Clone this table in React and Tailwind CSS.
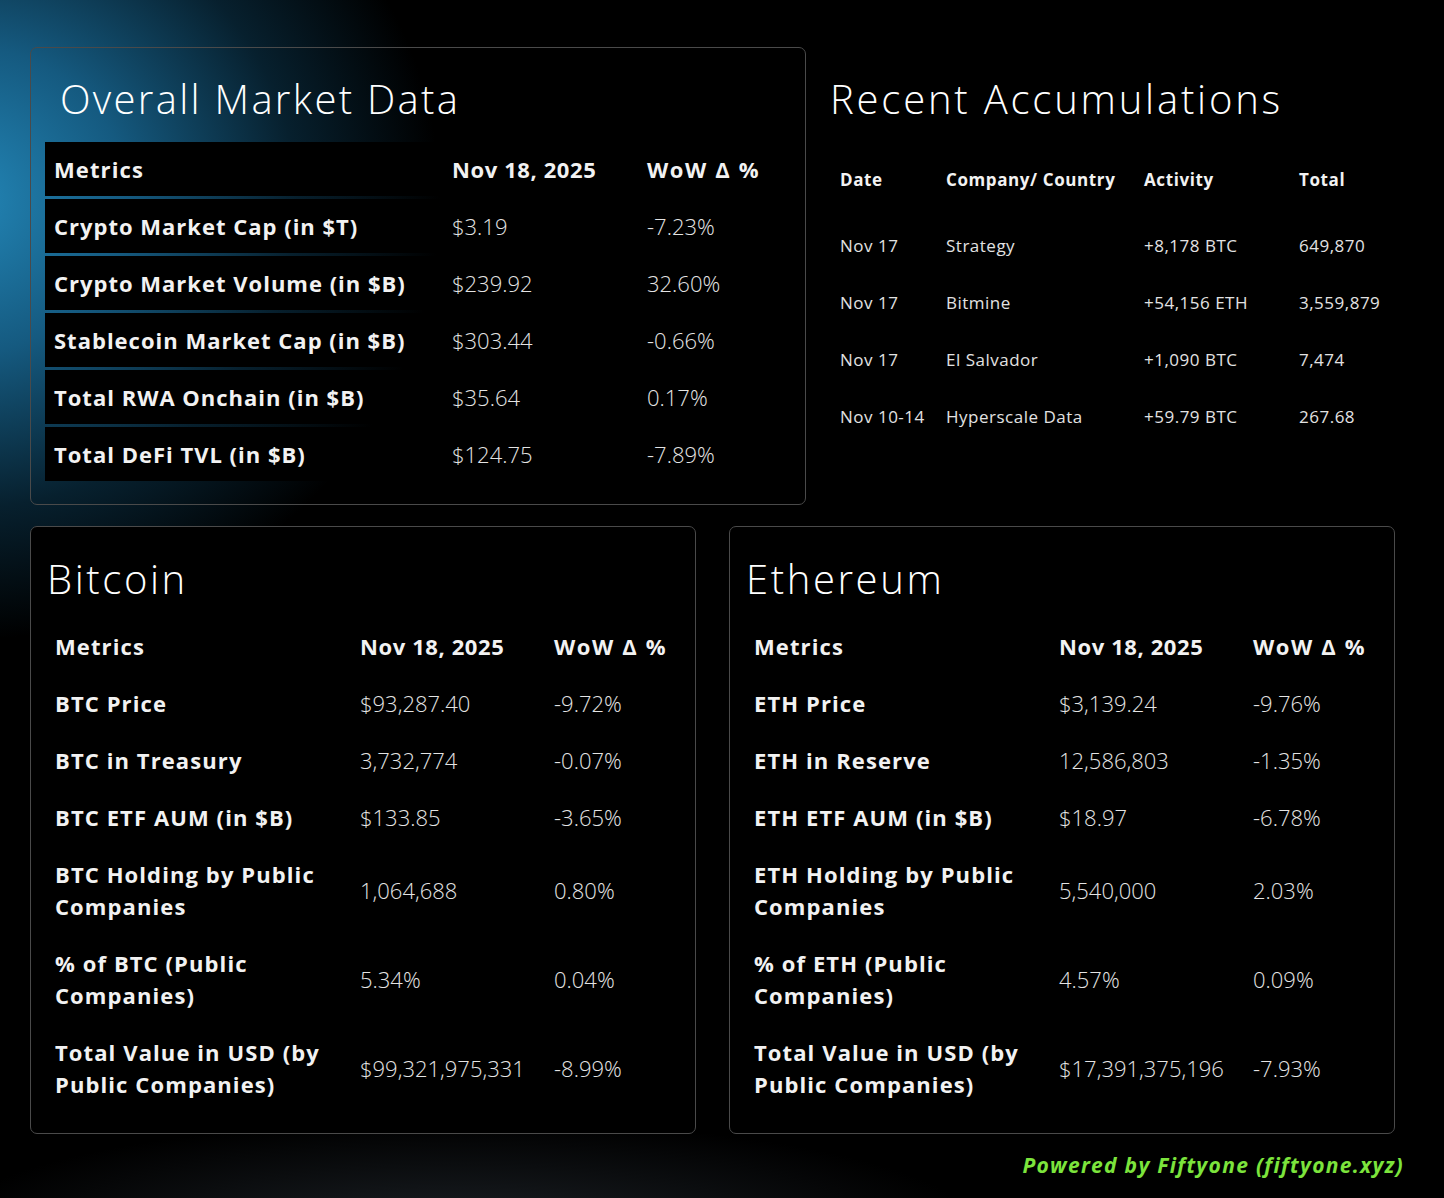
import React from 'react';

const marketRows = [
  ['Crypto Market Cap (in $T)', '$3.19', '-7.23%'],
  ['Crypto Market Volume (in $B)', '$239.92', '32.60%'],
  ['Stablecoin Market Cap (in $B)', '$303.44', '-0.66%'],
  ['Total RWA Onchain (in $B)', '$35.64', '0.17%'],
  ['Total DeFi TVL (in $B)', '$124.75', '-7.89%'],
];

const accumulations = [
  ['Nov 17', 'Strategy', '+8,178 BTC', '649,870'],
  ['Nov 17', 'Bitmine', '+54,156 ETH', '3,559,879'],
  ['Nov 17', 'El Salvador', '+1,090 BTC', '7,474'],
  ['Nov 10-14', 'Hyperscale Data', '+59.79 BTC', '267.68'],
];

const bitcoinRows = [
  [['BTC Price'], '$93,287.40', '-9.72%'],
  [['BTC in Treasury'], '3,732,774', '-0.07%'],
  [['BTC ETF AUM (in $B)'], '$133.85', '-3.65%'],
  [['BTC Holding by Public', 'Companies'], '1,064,688', '0.80%'],
  [['% of BTC (Public', 'Companies)'], '5.34%', '0.04%'],
  [['Total Value in USD (by', 'Public Companies)'], '$99,321,975,331', '-8.99%'],
];

const ethereumRows = [
  [['ETH Price'], '$3,139.24', '-9.76%'],
  [['ETH in Reserve'], '12,586,803', '-1.35%'],
  [['ETH ETF AUM (in $B)'], '$18.97', '-6.78%'],
  [['ETH Holding by Public', 'Companies'], '5,540,000', '2.03%'],
  [['% of ETH (Public', 'Companies)'], '4.57%', '0.09%'],
  [['Total Value in USD (by', 'Public Companies)'], '$17,391,375,196', '-7.93%'],
];

function AssetCard({ title, rows }) {
  return (
    <div className="w-[666px] h-[608px] rounded-[7px] border border-[#4a4a4a] bg-black">
      <h2 className="pl-[16px] pt-[28px] text-[40px] leading-[48px] font-light tracking-[2.6px] text-white">{title}</h2>
      <div className="mt-[14px] pl-[24px] grid grid-cols-[305px_194px_1fr] text-[22px] leading-[32px] text-[#f2f2f2]">
        <div className="h-[57px] flex items-center font-bold tracking-[1.1px]">Metrics</div>
        <div className="h-[57px] flex items-center font-bold tracking-[0.6px]">Nov 18, 2025</div>
        <div className="h-[57px] flex items-center font-bold tracking-[1.6px]">WoW Δ %</div>
        {rows.map(([label, value, change]) => {
          const h = label.length > 1 ? 'h-[89px]' : 'h-[57px]';
          return (
            <React.Fragment key={label.join(' ')}>
              <div className={`${h} flex flex-col justify-center font-bold tracking-[1.1px] whitespace-nowrap`}>
                {label.map((l) => (
                  <span key={l}>{l}</span>
                ))}
              </div>
              <div className={`${h} flex items-center font-light text-[#e4e4e4]`}>{value}</div>
              <div className={`${h} flex items-center font-light text-[#e4e4e4]`}>{change}</div>
            </React.Fragment>
          );
        })}
      </div>
    </div>
  );
}

export default function App() {
  return (
    <div className="w-[1444px] h-[1198px] overflow-hidden bg-black bg-[radial-gradient(ellipse_480px_440px_at_-40px_200px,#2387b8_0%,#155a80_35%,#07202e_70%,transparent_100%),radial-gradient(ellipse_520px_110px_at_460px_1230px,#1b2025_0%,transparent_100%)] font-['Open_Sans',sans-serif]">
      <div className="pl-[30px] pt-[47px]">
        {/* Top row */}
        <div className="flex">
          <div className="w-[776px] h-[458px] rounded-[7px] border border-[#4a4a4a]">
            <h2 className="pl-[29px] pt-[27px] text-[40px] leading-[48px] font-light tracking-[2.3px] text-white">Overall Market Data</h2>
            <div className="mt-[19px] ml-[14px] grid grid-cols-[394px_192px_153px] gap-[3px] text-[22px] text-[#f2f2f2]">
              <div className="h-[54px] bg-black flex items-center pl-[9px] font-bold tracking-[1.1px]">Metrics</div>
              <div className="h-[54px] bg-black flex items-center pl-[10px] font-bold tracking-[0.6px]">Nov 18, 2025</div>
              <div className="h-[54px] bg-black flex items-center pl-[10px] font-bold tracking-[1.6px]">WoW Δ %</div>
              {marketRows.map(([label, value, change]) => (
                <React.Fragment key={label}>
                  <div className="h-[54px] bg-black flex items-center pl-[9px] font-bold tracking-[1px] whitespace-nowrap">{label}</div>
                  <div className="h-[54px] bg-black flex items-center pl-[10px] font-light text-[#e4e4e4]">{value}</div>
                  <div className="h-[54px] bg-black flex items-center pl-[10px] font-light text-[#e4e4e4]">{change}</div>
                </React.Fragment>
              ))}
            </div>
          </div>

          <div className="ml-[24px] pt-[28px]">
            <h2 className="text-[40px] leading-[48px] font-light tracking-[2.8px] text-white">Recent Accumulations</h2>
            <div className="mt-[28px] grid grid-cols-[106px_198px_155px_120px] pl-[10px] text-[17px] text-[#f2f2f2]">
              <div className="h-[57px] mb-[9px] flex items-center font-bold tracking-[0.6px]">Date</div>
              <div className="h-[57px] mb-[9px] flex items-center font-bold tracking-[0.6px]">Company/ Country</div>
              <div className="h-[57px] mb-[9px] flex items-center font-bold tracking-[0.6px]">Activity</div>
              <div className="h-[57px] mb-[9px] flex items-center font-bold tracking-[0.6px]">Total</div>
              {accumulations.map((row) =>
                row.map((cell, i) => (
                  <div key={row[1] + i} className="h-[57px] flex items-center font-normal tracking-[0.5px] text-[#e2e2e2] whitespace-nowrap">
                    {cell}
                  </div>
                ))
              )}
            </div>
          </div>
        </div>

        {/* Coin cards */}
        <div className="mt-[21px] flex gap-[33px]">
          <AssetCard title="Bitcoin" rows={bitcoinRows} />
          <AssetCard title="Ethereum" rows={ethereumRows} />
        </div>
      </div>

      <div className="mt-[17px] pr-[40px] flex justify-end">
        <span className="text-[21px] leading-[28px] font-bold italic tracking-[1.3px] text-[#7ce43c]">Powered by Fiftyone (fiftyone.xyz)</span>
      </div>
    </div>
  );
}
